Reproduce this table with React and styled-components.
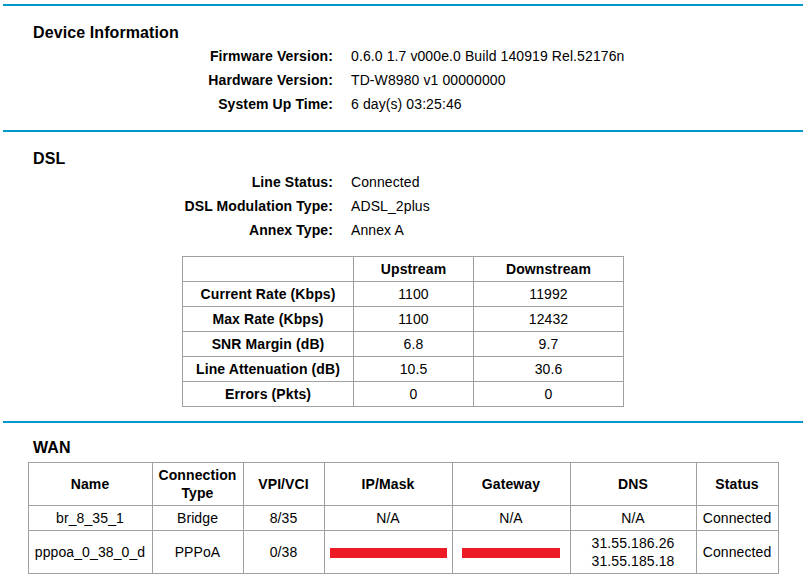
import { Fragment } from "react";
import styled, { createGlobalStyle } from "styled-components";

const GlobalStyle = createGlobalStyle`
  body {
    margin: 0;
    background: #fff;
    font-family: "Liberation Sans", Arial, sans-serif;
    font-size: 14px;
    letter-spacing: 0.1px;
    color: #000;
  }
`;

const Page = styled.div`
  padding: 4px 1px 0 3px;
`;

const Section = styled.section`
  border-top: 2px solid #0099cc;
  padding: ${({ top }) => top}px 0 14px;
`;

const Heading = styled.h2`
  margin: 0 0 ${({ gap }) => gap}px 30px;
  font-size: 16px;
  line-height: 20px;
  font-weight: bold;
`;

const InfoGrid = styled.div`
  display: grid;
  grid-template-columns: 330px 1fr;
  column-gap: 18px;
`;

const Label = styled.div`
  text-align: right;
  font-weight: bold;
  line-height: 24px;
`;

const Value = styled.div`
  line-height: 24px;
`;

const Table = styled.table`
  margin: ${({ top }) => top}px auto 0;
  width: ${({ w }) => w}px;
  border-collapse: collapse;
  table-layout: fixed;
  text-align: center;
  line-height: 18px;
`;

const Col = styled.col`
  width: ${({ w }) => w}px;
`;

const Head = styled.th`
  border: 1px solid #a0a0a0;
  padding: 3px 2px;
  font-weight: bold;
  vertical-align: middle;
`;

const Cell = styled.td`
  border: 1px solid #a0a0a0;
  padding: 3px 2px;
  vertical-align: middle;
`;

const Redacted = styled.span`
  display: inline-block;
  vertical-align: middle;
  width: ${({ w }) => w}px;
  height: 10px;
  background: #ed1c24;
`;

const device = [
  ["Firmware Version:", "0.6.0 1.7 v000e.0 Build 140919 Rel.52176n"],
  ["Hardware Version:", "TD-W8980 v1 00000000"],
  ["System Up Time:", "6 day(s) 03:25:46"],
];

const dsl = [
  ["Line Status:", "Connected"],
  ["DSL Modulation Type:", "ADSL_2plus"],
  ["Annex Type:", "Annex A"],
];

const rates = [
  ["Current Rate (Kbps)", "1100", "11992"],
  ["Max Rate (Kbps)", "1100", "12432"],
  ["SNR Margin (dB)", "6.8", "9.7"],
  ["Line Attenuation (dB)", "10.5", "30.6"],
  ["Errors (Pkts)", "0", "0"],
];

const wanCols = [124, 91, 81, 128, 118, 126, 82];
const wanHeads = ["Name", "Connection Type", "VPI/VCI", "IP/Mask", "Gateway", "DNS", "Status"];

function Info({ rows }) {
  return (
    <InfoGrid>
      {rows.map(([k, v]) => (
        <Fragment key={k}>
          <Label>{k}</Label>
          <Value>{v}</Value>
        </Fragment>
      ))}
    </InfoGrid>
  );
}

export default function App() {
  return (
    <Page>
      <GlobalStyle />
      <Section top={17}>
        <Heading gap={1}>Device Information</Heading>
        <Info rows={device} />
      </Section>

      <Section top={17}>
        <Heading gap={1}>DSL</Heading>
        <Info rows={dsl} />
        <Table top={14} w={441}>
          <colgroup>
            <Col w={171} />
            <Col w={120} />
            <Col w={150} />
          </colgroup>
          <tbody>
            <tr>
              <Head></Head>
              <Head>Upstream</Head>
              <Head>Downstream</Head>
            </tr>
            {rates.map(([k, up, down]) => (
              <tr key={k}>
                <Head>{k}</Head>
                <Cell>{up}</Cell>
                <Cell>{down}</Cell>
              </tr>
            ))}
          </tbody>
        </Table>
      </Section>

      <Section top={15}>
        <Heading gap={4}>WAN</Heading>
        <Table top={0} w={750}>
          <colgroup>
            {wanCols.map((w, i) => (
              <Col key={i} w={w} />
            ))}
          </colgroup>
          <tbody>
            <tr>
              {wanHeads.map((h) => (
                <Head key={h}>{h}</Head>
              ))}
            </tr>
            <tr>
              <Cell>br_8_35_1</Cell>
              <Cell>Bridge</Cell>
              <Cell>8/35</Cell>
              <Cell>N/A</Cell>
              <Cell>N/A</Cell>
              <Cell>N/A</Cell>
              <Cell>Connected</Cell>
            </tr>
            <tr>
              <Cell>pppoa_0_38_0_d</Cell>
              <Cell>PPPoA</Cell>
              <Cell>0/38</Cell>
              <Cell>
                <Redacted w={117} />
              </Cell>
              <Cell>
                <Redacted w={98} />
              </Cell>
              <Cell>
                31.55.186.26
                <br />
                31.55.185.18
              </Cell>
              <Cell>Connected</Cell>
            </tr>
          </tbody>
        </Table>
      </Section>
    </Page>
  );
}
